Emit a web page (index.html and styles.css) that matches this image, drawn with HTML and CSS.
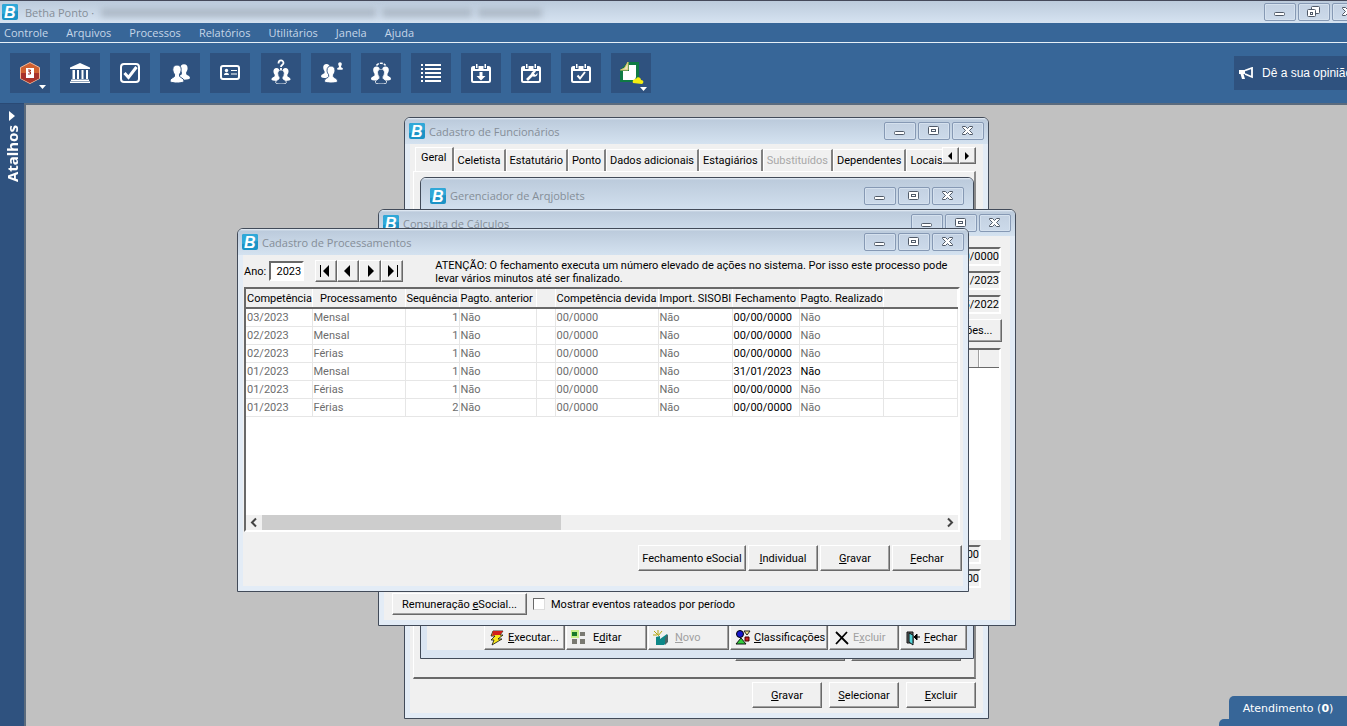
FILE: index.html
```html
<!DOCTYPE html>
<html lang="pt-BR">
<head>
<meta charset="utf-8">
<title>Betha Ponto</title>
<link rel="stylesheet" href="styles.css">
</head>
<body>
<svg class="sprite" aria-hidden="true">
  <symbol id="logo" viewBox="0 0 16 16"><rect width="16" height="16" rx="2" fill="#1b93c6"/><path d="M2 0h12a2 2 0 0 1 2 2v5L0 10V2a2 2 0 0 1 2-2z" fill="#30a8d8"/><text x="2" y="14" class="logo-b">B</text></symbol>
  <symbol id="w-min" viewBox="0 0 32 18"><rect x="10.500" y="9.500" width="10" height="3" rx="1" fill="#fff" stroke="#505a68"/></symbol>
  <symbol id="w-max" viewBox="0 0 32 18"><rect x="10.500" y="4.500" width="10" height="8" rx="1" fill="#fff" stroke="#505a68"/><rect x="13.500" y="7.500" width="4" height="2" fill="#fff" stroke="#505a68"/></symbol>
  <symbol id="w-rest" viewBox="0 0 32 18"><rect x="13.500" y="3.500" width="8" height="7" rx="1" fill="#fff" stroke="#505a68"/><rect x="9.500" y="6.500" width="8" height="7" rx="1" fill="#fff" stroke="#505a68"/><rect x="12.500" y="9.500" width="2" height="2" fill="#fff" stroke="#505a68"/></symbol>
  <symbol id="w-close" viewBox="0 0 32 18"><path d="M10.500 4.500h3l2 2 2-2h3v1l-3 3 3 3v1h-3l-2-2-2 2h-3v-1l3-3-3-3z" fill="#fff" stroke="#505a68"/></symbol>
  <symbol id="person" viewBox="0 0 14 18"><path d="M7 0c2.800 0 4.200 1.900 4.200 4.500 0 2-.8 3.600-1.700 4.700v2c.3 1.500 4.500 1.700 4.500 4.800 0 1.300-3 2-7 2s-7-.7-7-2c0-3.100 4.200-3.300 4.500-4.800v-2C3.600 8.100 2.800 6.500 2.800 4.500 2.800 1.900 4.200 0 7 0z"/></symbol>
  <symbol id="cal" viewBox="0 0 20 20"><path d="M2.500 3H4v3h3.500V3h5v3H16V3h1.500A2.500 2.500 0 0 1 20 5.500v12a2.500 2.500 0 0 1-2.500 2.500h-15A2.500 2.500 0 0 1 0 17.500v-12A2.500 2.500 0 0 1 2.500 3zM2 8v9.500c0 .3.200.5.500.5h15c.3 0 .5-.2.500-.5V8z" fill-rule="evenodd"/><path d="M5 1h1.500v4H5zM13.500 1H15v4h-1.500z"/></symbol>
</svg>

<div class="app">
  <header class="titlebar">
    <svg class="logo"><use href="#logo"/></svg>
    <span class="caption">Betha Ponto ·</span>
    <span class="smudges"><i class="smudge long"></i><i class="smudge"></i><i class="smudge short"></i></span>
    <div class="winbtns main-btns">
      <button aria-label="Minimizar"><svg><use href="#w-min"/></svg></button>
      <button aria-label="Restaurar"><svg><use href="#w-rest"/></svg></button>
      <button aria-label="Fechar"><svg><use href="#w-close"/></svg></button>
    </div>
  </header>

  <nav class="menu">
    <button>Controle</button><button>Arquivos</button><button>Processos</button><button>Relatórios</button><button>Utilitários</button><button>Janela</button><button>Ajuda</button>
  </nav>

  <div class="toolbar">
    <button aria-label="Módulo"><svg viewBox="0 0 40 40"><path d="M20 9.500l9.500 5v11L20 30.500l-9.500-5v-11z" fill="#d0602f" stroke="#efb79a"/><path d="M11 20h18v5.500l-9 4.500-9-4.500z" fill="#a8322a"/><path d="M16 15h8v10h-8z" fill="#fff"/><path d="M18 17h2.500v1H19v1h1.500v2H18" fill="none" stroke="#a32c22"/><path d="M29 32h7l-3.500 4z" fill="#fff"/></svg></button>
    <button aria-label="Entidade"><svg viewBox="0 0 40 40"><path d="M20 10l10 4.500V16H10v-1.500zM12.500 17H15v9h-2.500zM17 17h2v9h-2zM21.500 17h2v9h-2zM26 17h2v9h-2zM11 26.500h18V28H11zM10 28.500h20V30H10z"/></svg></button>
    <button aria-label="Confirmar"><svg viewBox="0 0 40 40"><rect x="11" y="11" width="18" height="18" rx="3" fill="none" stroke="#fff" stroke-width="2"/><path d="M14.500 20l4 4.500 8-10.500" fill="none" stroke="#fff" stroke-width="3"/></svg></button>
    <button aria-label="Pessoas"><svg viewBox="0 0 40 40"><use href="#person" x="18" y="11" width="12" height="16"/><use class="cut" href="#person" x="10" y="12" width="14" height="18"/></svg></button>
    <button aria-label="Crachá"><svg viewBox="0 0 40 40"><rect x="11" y="13" width="18" height="13" rx="2" fill="none" stroke="#fff" stroke-width="2"/><circle cx="16.500" cy="17.500" r="1.700"/><path d="M14 22c0-3 5-3 5 0zM21 17h6v1h-6zM21 20.500h6v1h-6z"/></svg></button>
    <button class="extra" aria-label="Consultar pessoas"><svg viewBox="0 0 40 40"><use href="#person" x="10" y="15" width="11" height="13"/><use href="#person" x="19" y="15" width="11" height="13"/><use class="line" href="#person" x="14" y="17" width="12" height="14"/><path d="M17.500 10.500c0-4 5-4 5-.5 0 2-2.500 1.500-2.500 4M20 15v2" fill="none" stroke="#fff" stroke-width="1.800"/></svg></button>
    <button aria-label="Grupo"><svg viewBox="0 0 40 40"><use href="#person" x="10" y="11" width="11" height="14"/><use class="cut" href="#person" x="13" y="13" width="14" height="17"/><use href="#person" x="26" y="9" width="6" height="8"/></svg></button>
    <button aria-label="Equipe"><svg viewBox="0 0 40 40"><use href="#person" x="10" y="13" width="11" height="15"/><use href="#person" x="19" y="13" width="11" height="15"/><use class="line" href="#person" x="14" y="16" width="12" height="15"/><path d="M15.500 12.500c2-3 7-3 9 0" fill="none" stroke="#fff" stroke-width="1.500" stroke-dasharray="3 1"/></svg></button>
    <button aria-label="Lista"><svg viewBox="0 0 40 40"><path d="M10 11h2v2h-2zm4 0h16v2H14zM10 15h2v2h-2zm4 0h16v2H14zM10 19h2v2h-2zm4 0h16v2H14zM10 23h2v2h-2zm4 0h16v2H14zM10 27h2v2h-2zm4 0h16v2H14z"/></svg></button>
    <button aria-label="Baixar período"><svg viewBox="0 0 40 40"><use href="#cal" x="10" y="10" width="20" height="20"/><path d="M18.500 19h3v4h3L20 27.500 15.500 23h3z"/></svg></button>
    <button aria-label="Ajustar período"><svg viewBox="0 0 40 40"><use href="#cal" x="10" y="10" width="20" height="20"/><path d="M16 27l6-6" stroke="#fff" stroke-width="2.600"/><path d="M21 23c-2-3 1-6 4-4.500l-2 2 1.500 1.500 2-2c.5 3-3 5-5.500 3z"/></svg></button>
    <button aria-label="Fechar período"><svg viewBox="0 0 40 40"><use href="#cal" x="10" y="10" width="20" height="20"/><path d="M16.500 22.500l2.500 3 5-6.500" fill="none" stroke="#fff" stroke-width="2"/></svg></button>
    <button aria-label="Notas"><svg viewBox="0 0 40 40"><path d="M17 9h11v18l-2 2H9V17z" fill="#0f7a44"/><path d="M18 12h7v12l-1 3H12v-9h6z" fill="#fff"/><path d="M17 9v8H9.500l4-2z" fill="#e9e3bf" stroke="#d9c268"/><path d="M22 30c-1-3 1-4 3-4 1-3 5-2 5 1 3 0 3 3 1 4z" fill="#f5ee10"/><path d="M29 34h7l-3.500 4z" fill="#fff"/></svg></button>
    <a class="opinion" href="#"><svg viewBox="0 0 14 12"><path d="M0 3h6v4H0zM1.500 7h3L6 12H3z"/><path d="M6 3.500L13 1v9L6 7" fill="none" stroke="#fff" stroke-width="1.800"/></svg>Dê a sua opinião</a>
  </div>

  <div class="main">
    <aside class="shortcuts"><svg viewBox="0 0 6 10"><path d="M0 0l6 5-6 5z"/></svg><span>Atalhos</span></aside>
    <main class="desk">

      <section class="win win-func">
        <div class="bar"><svg class="logo"><use href="#logo"/></svg><h2>Cadastro de Funcionários</h2>
          <div class="winbtns"><button aria-label="Minimizar"><svg><use href="#w-min"/></svg></button><button aria-label="Maximizar"><svg><use href="#w-max"/></svg></button><button aria-label="Fechar"><svg><use href="#w-close"/></svg></button></div></div>
        <div class="body">
          <div class="tabrow">
            <div class="tabs" role="tablist">
              <button role="tab" class="on" aria-selected="true">Geral</button><button role="tab">Celetista</button><button role="tab">Estatutário</button><button role="tab">Ponto</button><button role="tab">Dados adicionais</button><button role="tab">Estagiários</button><button role="tab" disabled>Substituídos</button><button role="tab">Dependentes</button><button role="tab">Locais</button>
            </div>
            <div class="spin"><button class="btn" aria-label="Anterior"><svg viewBox="0 0 16 14"><path d="M10 3v8L6 7z"/></svg></button><button class="btn" aria-label="Próxima"><svg viewBox="0 0 16 14"><path d="M6 3v8l4-4z"/></svg></button></div>
          </div>
          <div class="panel"><button class="btn" aria-label="Opção 1"></button><button class="btn" aria-label="Opção 2"></button></div>
          <div class="actions"><button class="btn"><u>G</u>ravar</button><button class="btn"><u>S</u>elecionar</button><button class="btn"><u>E</u>xcluir</button></div>
        </div>
      </section>

      <section class="win win-ger">
        <div class="bar"><svg class="logo"><use href="#logo"/></svg><h2>Gerenciador de Arqjoblets</h2>
          <div class="winbtns"><button aria-label="Minimizar"><svg><use href="#w-min"/></svg></button><button aria-label="Maximizar"><svg><use href="#w-max"/></svg></button><button aria-label="Fechar"><svg><use href="#w-close"/></svg></button></div></div>
        <div class="body">
          <div class="icons">
            <button class="btn w81"><svg viewBox="0 0 16 16"><path d="M4 1h10l-3 4h3l-5 4h4L3 15l2-5H2l4-4H2z" fill="#f7e71c" stroke="#111" stroke-width=".8"/><path d="M4 1h10l-3 4H6l-3 1z" fill="#d3201c"/></svg><span><u>E</u>xecutar...</span></button>
            <button class="btn w81"><svg viewBox="0 0 16 16"><rect width="8" height="8" fill="#c6f08a"/><path d="M1 2h5v4H1z" fill="#167a2a"/><path d="M9 2h5v4H9zM1 9h5v5H1zM9 9h5v5H9z" fill="#7a7a72"/></svg><span class="far">E<u>d</u>itar</span></button>
            <button class="btn w81" disabled><svg viewBox="0 0 16 16"><path d="M3 7l4-1v3l7-5v8l-3 3H3z" fill="#0d8787"/><path d="M15 4v8l-3 3V8z" fill="#4b6464"/><path d="M1 1l4 4M5 0v5M9 1L5 6M0 5h4" stroke="#b4a510"/></svg><span class="far"><u>N</u>ovo</span></button>
            <button class="btn w98"><svg viewBox="0 0 16 16"><circle cx="5" cy="4" r="3.500" fill="#1717cc" stroke="#000"/><path d="M9 1h6l-3 4z" fill="#f5e98a" stroke="#222"/><path d="M10 7h4v4h-4z" fill="#c22" stroke="#400"/><path d="M6 8l5 6H1z" fill="#32cf3c" stroke="#111"/></svg><span><u>C</u>lassificações</span></button>
            <button class="btn w70" disabled><svg viewBox="0 0 16 16"><path d="M2 2l12 12M13 2L2 14" stroke="#000" stroke-width="1.800"/></svg><span>E<u>x</u>cluir</span></button>
            <button class="btn w67"><svg viewBox="0 0 16 16"><path d="M2 2h6v11H2z" fill="#666" stroke="#111"/><path d="M4 3l4 2v10l-4-3z" fill="#53d3d8" stroke="#111"/><path d="M10 7h5M12 4v6l-3-3z" fill="#000" stroke="#000"/></svg><span><u>F</u>echar</span></button>
          </div>
        </div>
      </section>

      <section class="win win-cons">
        <div class="bar"><svg class="logo"><use href="#logo"/></svg><h2>Consulta de Cálculos</h2>
          <div class="winbtns"><button aria-label="Minimizar"><svg><use href="#w-min"/></svg></button><button aria-label="Maximizar"><svg><use href="#w-max"/></svg></button><button aria-label="Fechar"><svg><use href="#w-close"/></svg></button></div></div>
        <div class="body">
          <div class="fields"><input aria-label="Data" value="00/0000" readonly><input aria-label="Competência" value="01/2023" readonly><input aria-label="Admissão" value="05/2022" readonly></div>
          <button class="btn more">Informações...</button>
          <div class="sunken list"><div class="list-head"><span></span><span></span></div></div>
          <div class="fields totals"><input aria-label="Total 1" value="0,00" readonly><input aria-label="Total 2" value="0,00" readonly></div>
          <div class="foot"><button class="btn">Remuneração <u>e</u>Social...</button><label class="check"><input type="checkbox">Mostrar eventos rateados por período</label></div>
        </div>
      </section>

      <section class="win win-proc">
        <div class="bar"><svg class="logo"><use href="#logo"/></svg><h2>Cadastro de Processamentos</h2>
          <div class="winbtns"><button aria-label="Minimizar"><svg><use href="#w-min"/></svg></button><button aria-label="Maximizar"><svg><use href="#w-max"/></svg></button><button aria-label="Fechar"><svg><use href="#w-close"/></svg></button></div></div>
        <div class="body">
          <div class="top">
            <label for="ano">Ano:</label><input id="ano" class="year" value="2023">
            <div class="nav">
              <button class="btn" aria-label="Primeiro"><svg viewBox="0 0 16 14"><path d="M2 1h1v12H2zM11 1v12L5 7z"/></svg></button><button class="btn" aria-label="Anterior"><svg viewBox="0 0 16 14"><path d="M10 1v12L4 7z"/></svg></button><button class="btn" aria-label="Próximo"><svg viewBox="0 0 16 14"><path d="M6 1v12l6-6z"/></svg></button><button class="btn" aria-label="Último"><svg viewBox="0 0 16 14"><path d="M4 1v12l6-6zM13 1h1v12h-1z"/></svg></button>
            </div>
            <p>ATENÇÃO: O fechamento executa um número elevado de ações no sistema. Por isso este processo pode levar vários minutos até ser finalizado.</p>
          </div>
          <div class="sunken grid">
            <table>
              <colgroup><col class="c66"><col class="c93"><col class="c54"><col class="c77"><col class="c19"><col class="c103"><col class="c74"><col class="c67"><col class="c84"><col></colgroup>
              <thead><tr><th>Competência</th><th>Processamento</th><th>Sequência</th><th class="l">Pagto. anterior</th><th></th><th>Competência devida</th><th>Import. SISOBI</th><th>Fechamento</th><th>Pagto. Realizado</th><th></th></tr></thead>
              <tbody>
              <tr><td>03/2023</td><td>Mensal</td><td class="r">1</td><td>Não</td><td></td><td>00/0000</td><td>Não</td><td class="k">00/00/0000</td><td>Não</td><td></td></tr>
              <tr><td>02/2023</td><td>Mensal</td><td class="r">1</td><td>Não</td><td></td><td>00/0000</td><td>Não</td><td class="k">00/00/0000</td><td>Não</td><td></td></tr>
              <tr><td>02/2023</td><td>Férias</td><td class="r">1</td><td>Não</td><td></td><td>00/0000</td><td>Não</td><td class="k">00/00/0000</td><td>Não</td><td></td></tr>
              <tr><td>01/2023</td><td>Mensal</td><td class="r">1</td><td>Não</td><td></td><td>00/0000</td><td>Não</td><td class="k">31/01/2023</td><td class="k">Não</td><td></td></tr>
              <tr><td>01/2023</td><td>Férias</td><td class="r">1</td><td>Não</td><td></td><td>00/0000</td><td>Não</td><td class="k">00/00/0000</td><td>Não</td><td></td></tr>
              <tr><td>01/2023</td><td>Férias</td><td class="r">2</td><td>Não</td><td></td><td>00/0000</td><td>Não</td><td class="k">00/00/0000</td><td>Não</td><td></td></tr>
              </tbody>
            </table>
            <div class="scroll"><svg viewBox="0 0 16 15"><path d="M10 3.500l-4 4 4 4"/></svg><div class="track"><div class="thumb"></div></div><svg viewBox="0 0 16 15"><path d="M6 3.500l4 4-4 4"/></svg></div>
          </div>
          <div class="actions"><button class="btn wide">Fechamento eSocial</button><button class="btn"><u>I</u>ndividual</button><button class="btn"><u>G</u>ravar</button><button class="btn"><u>F</u>echar</button></div>
        </div>
      </section>

      <button class="chat">Atendimento (<b>0</b>)</button>
    </main>
  </div>
</div>
</body>
</html>
```
FILE: styles.css
```css
* { box-sizing: border-box; }
body { margin: 0; font-family: Roboto, "Liberation Sans", sans-serif; font-size: 11px; color: #000; }
button, input { font: inherit; color: inherit; margin: 0; padding: 0; }
svg { display: block; }
.sprite { position: absolute; width: 0; height: 0; }
.logo { width: 16px; height: 16px; flex: none; }
.logo-b { font: italic bold 16px "Liberation Sans", Arial, sans-serif; fill: #fff; }

.app { display: flex; flex-direction: column; height: 100vh; overflow: hidden; background: #376698; }

.titlebar { display: flex; align-items: center; gap: 7px; height: 23px; padding-left: 2px; flex: none; overflow: hidden; border-top: 1px solid #45495a; background: linear-gradient(#bccbdc, #d6e3f1); }
.caption { font: 11px "Open Sans", sans-serif; color: #858e98; white-space: nowrap; }
.smudges { display: flex; gap: 6px; flex: 1; }
.smudge { width: 90px; height: 9px; background: #adb9c7; filter: blur(3px); }
.smudge.long { width: 275px; }
.smudge.short { width: 64px; }

.winbtns { display: flex; gap: 2px; flex: none; }
.winbtns button { width: 32px; height: 18px; border: 1px solid #8699b4; border-radius: 2px; background: linear-gradient(#c3d1e2, #ccdaea); box-shadow: inset 0 0 0 1px #d5e1ee; }
.winbtns svg { width: 32px; height: 18px; margin: -1px; }
.main-btns { margin-right: -17px; }

.menu { display: flex; height: 20px; flex: none; align-items: center; gap: 18px; padding-left: 4px; border-bottom: 1px solid #e6f0f8; }
.menu button { border: 0; background: none; font: 11px "Open Sans", sans-serif; color: #c6d6e8; }

.toolbar { display: flex; align-items: center; gap: 10px; height: 60px; flex: none; padding-left: 10px; overflow: hidden; fill: #fff; }
.toolbar button { width: 40px; height: 40px; flex: none; border: 0; background: #2f527f; }
.toolbar .extra { margin-left: 1px; }
.toolbar button svg { width: 40px; height: 40px; }
.cut { stroke: #2f527f; stroke-width: 1px; }
.line { fill: #2f527f; stroke: #fff; stroke-width: 1px; }
.opinion { display: flex; align-items: center; gap: 9px; flex: none; width: 124px; height: 34px; margin: 0 -11px 0 auto; padding-left: 5px; background: #2f527f; color: #fff; font: 12px "Liberation Sans", Arial, sans-serif; text-decoration: none; white-space: nowrap; }
.opinion svg { width: 14px; height: 12px; flex: none; }

.main { display: flex; flex: 1; min-height: 0; }
.shortcuts { display: flex; flex-direction: column; align-items: center; gap: 4px; width: 24px; flex: none; padding-top: 7px; border-top: 1px solid #2a4a75; background: #2f527f; color: #fff; fill: #fff; }
.shortcuts svg { width: 6px; height: 10px; }
.shortcuts span { writing-mode: vertical-rl; transform: rotate(180deg); font: bold 15px "Noto Sans", sans-serif; }
.desk { position: relative; flex: 1; min-width: 0; overflow: hidden; border: solid #5b6b7d; border-width: 2px 0 0 2px; background: #c1c1c1; }

.win { position: absolute; display: flex; flex-direction: column; border: 1px solid #424b59; border-radius: 6px 6px 0 0; background: #e3ecf6; overflow: hidden; }
.win-func { left: 378px; top: 12px; width: 585px; height: 602px; }
.win-ger { left: 394px; top: 72px; width: 554px; height: 482px; }
.win-cons { left: 352px; top: 104px; width: 638px; height: 417px; }
.win-proc { left: 211px; top: 123px; width: 732px; height: 364px; }
.bar { display: flex; align-items: center; gap: 4px; height: 26px; flex: none; padding: 0 4px; background: linear-gradient(#e8f0f8, #bccbdc 2px, #d4e2f0); }
.win-ger .bar { height: 35px; padding: 0 9px; }
.bar h2 { flex: 1; margin: 0; font: 11px "Open Sans", sans-serif; color: #858e98; }
.body { display: flex; flex-direction: column; flex: 1; min-height: 0; margin: 0 5px 5px; background: #f0f0f0; }
.win-ger { background: #dae5f2; }
.win-ger .body { justify-content: flex-end; margin: 0 6px 8px; }

.btn { border: 1px solid; border-color: #fff #696969 #696969 #fff; background: #f0f0f0; box-shadow: inset -1px -1px 0 #a0a0a0; white-space: nowrap; }
.btn:disabled { color: #a0a0a0; }
.sunken { border: 2px solid; border-color: #696969 #fff #fff #696969; background: #fff; }
.actions { display: flex; justify-content: flex-end; }
.actions .btn { width: 70px; height: 26px; }

.tabrow { display: flex; align-items: flex-end; margin: 3px 7px 0 5px; height: 24px; }
.tabs { display: flex; align-items: flex-end; flex: 1; min-width: 0; overflow: hidden; height: 24px; }
.tabs button { flex: none; height: 22px; padding: 0 3px 1px; border: solid; border-width: 1px 2px 0 1px; border-color: #fff #808080 #fff #fff; background: #f0f0f0; }
.tabs button.on { height: 24px; padding: 0 5px 4px; }
.tabs button:disabled { color: #a8a8a8; }
.spin { display: flex; align-self: flex-start; }
.spin .btn { width: 17px; height: 17px; }
.panel { display: flex; flex: 1; align-items: flex-end; justify-content: flex-end; gap: 6px; margin: 0 7px 0 3px; padding: 0 13px 16px; border: solid; border-width: 1px 2px 2px 1px; border-color: #fff #8a8a8a #696969 #fff; }
.panel .btn { width: 110px; height: 26px; }
.win-func .actions { gap: 7px; padding: 3px 7px 5px; }

.icons { display: flex; justify-content: flex-end; gap: 1px; }
.icons .btn { display: flex; align-items: center; gap: 3px; height: 25px; padding-left: 4px; }
.icons svg { width: 16px; height: 16px; flex: none; }
.icons .far { padding-left: 3px; }
.w81 { width: 81px; } .w98 { width: 98px; } .w70 { width: 70px; } .w67 { width: 67px; }

.fields { display: flex; flex-direction: column; align-items: flex-end; gap: 5px; padding: 11px 9px 0; }
.fields input { width: 70px; height: 19px; border: 2px solid; border-color: #696969 #fff #fff #696969; background: #f0f0f0; text-align: right; }
.more { align-self: flex-end; width: 90px; height: 23px; margin: 5px 8px 6px; }
.list { flex: 1; margin: 0 9px 0 20px; }
.list-head { display: flex; justify-content: flex-end; height: 18px; border-bottom: 1px solid #696969; background: #f0f0f0; }
.list-head span { width: 21px; border-left: 1px solid #a0a0a0; box-shadow: inset 1px 0 0 #fff; }
.totals { padding: 5px 29px 0; }
.foot { display: flex; align-items: center; gap: 6px; padding: 5px 8px 5px; }
.foot .btn { width: 135px; height: 22px; }
.check { display: flex; align-items: center; gap: 6px; }
.check input { appearance: none; width: 12px; height: 12px; border: 1px solid; border-color: #696969 #ddd #ddd #696969; background: #fff; }

.top { display: flex; align-items: center; height: 32px; padding-left: 1px; }
.year { width: 35px; height: 20px; margin: 0 11px 0 3px; padding-right: 1px; border: 2px solid; border-color: #696969 #fff #fff #696969; background: #fff; text-align: right; }
.nav { display: flex; margin-right: 32px; }
.nav .btn { width: 22px; height: 22px; }
.nav svg, .spin svg { width: 16px; height: 14px; margin: 0 auto; }
.spin svg { margin: 0 -1px; }
.top p { flex: 1; margin: 0; padding: 2px 8px 0 0; line-height: 13px; }
.grid { display: flex; flex-direction: column; justify-content: space-between; flex: 1; margin: 0 3px 0 1px; }
table { width: 100%; table-layout: fixed; border-collapse: collapse; }
th, td { padding: 0 1px; height: 18px; white-space: nowrap; overflow: hidden; font-weight: normal; line-height: 17px; }
th { height: 19px; border-right: 1px solid #fff; border-bottom: 2px solid #696969; background: #f0f0f0; text-align: center; }
th.l { text-align: left; }
td { border-right: 1px solid #e6e6e6; border-bottom: 1px solid #e6e6e6; color: #6d6d6d; }
td.r { padding: 0; text-align: right; }
td.k { color: #000; }
.c66 { width: 66px; } .c93 { width: 93px; } .c54 { width: 54px; } .c77 { width: 77px; } .c19 { width: 19px; }
.c103 { width: 103px; } .c74 { width: 74px; } .c67 { width: 67px; } .c84 { width: 84px; }
.scroll { display: flex; height: 15px; background: #f0f0f0; }
.scroll svg { width: 16px; height: 15px; fill: none; stroke: #444; stroke-width: 2px; }
.track { flex: 1; }
.thumb { width: 44%; height: 15px; background: #cdcdcd; }
.win-proc .actions { gap: 2px; padding: 13px 1px 15px; }
.actions .wide { width: 108px; }

.chat { position: absolute; right: 0; bottom: 0; width: 118px; height: 30px; padding: 0 0 6px; border: 0; border-radius: 5px 0 0 0; background: #376698; color: #fff; font: 11px "DejaVu Sans", sans-serif; white-space: nowrap; box-shadow: -10px 23px 0 #376698; }
```
